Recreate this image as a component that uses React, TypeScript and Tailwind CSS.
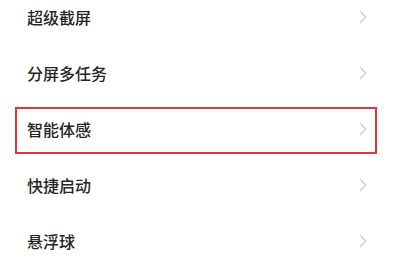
const items = ['超级截屏', '分屏多任务', '智能体感', '快捷启动', '悬浮球'];

function Chevron() {
  return (
    <svg width="8" height="14" viewBox="0 0 8 14" fill="none" className="shrink-0">
      <polyline points="1.5,1.5 6.5,7 1.5,12.5" stroke="#d2d2d2" strokeWidth="1.3" strokeLinecap="round" strokeLinejoin="round" />
    </svg>
  );
}

export default function App() {
  return (
    <div
      className="h-[262px] w-[400px] overflow-hidden bg-white"
      style={{ fontFamily: '"Noto Sans CJK SC", "Noto Sans", sans-serif' }}
    >
      <div className="-mt-[11px] flex flex-col">
        {items.map((label, i) => (
          <div key={label} className="relative flex h-[56px] items-center justify-between pl-[27px] pr-[33px]">
            <span className="text-[16px] font-medium leading-none text-[#262626]">{label}</span>
            <Chevron />
            {i === 2 && (
              <div className="pointer-events-none absolute top-[6px] bottom-[3px] left-[15px] right-[23px] border-2 border-[#e2343f]" />
            )}
          </div>
        ))}
      </div>
    </div>
  );
}
